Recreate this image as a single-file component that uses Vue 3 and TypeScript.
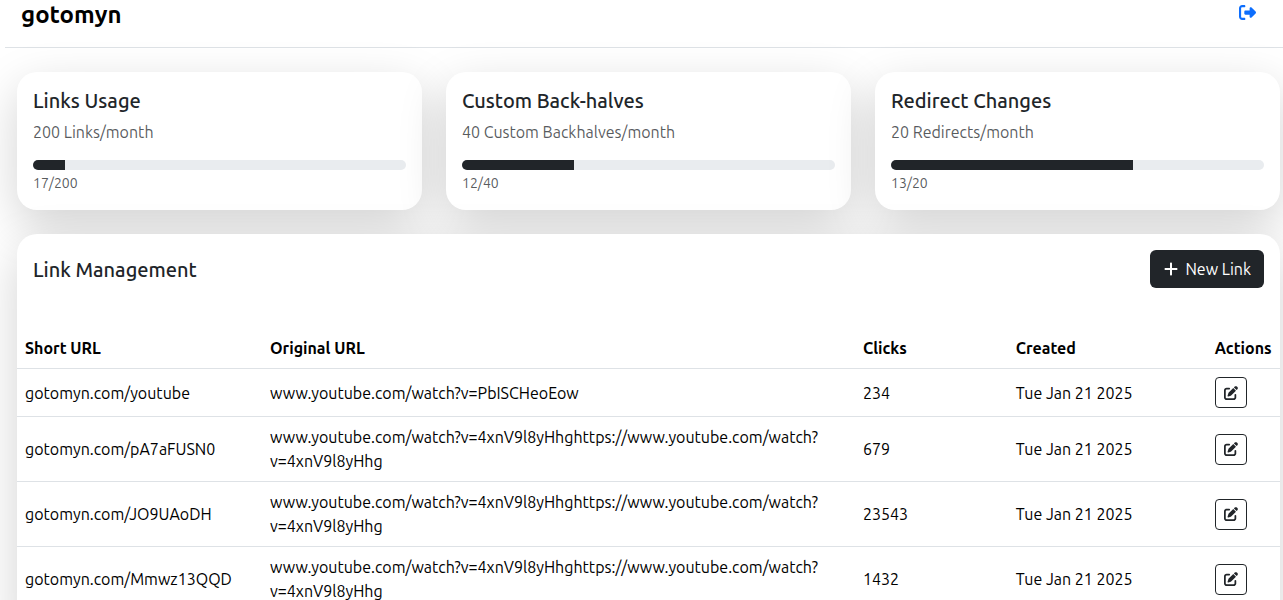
<script setup lang="ts">
interface Usage {
  title: string
  allowance: string
  used: number
  limit: number
}

interface ShortLink {
  short: string
  original: string
  clicks: number
  created: string
}

const usages: Usage[] = [
  { title: 'Links Usage', allowance: '200 Links/month', used: 17, limit: 200 },
  { title: 'Custom Back-halves', allowance: '40 Custom Backhalves/month', used: 12, limit: 40 },
  { title: 'Redirect Changes', allowance: '20 Redirects/month', used: 13, limit: 20 },
]

const repeatedUrl = 'www.youtube.com/watch?v=4xnV9l8yHhghttps://www.youtube.com/watch?v=4xnV9l8yHhg'

const links: ShortLink[] = [
  { short: 'gotomyn.com/youtube', original: 'www.youtube.com/watch?v=PbISCHeoEow', clicks: 234, created: 'Tue Jan 21 2025' },
  { short: 'gotomyn.com/pA7aFUSN0', original: repeatedUrl, clicks: 679, created: 'Tue Jan 21 2025' },
  { short: 'gotomyn.com/JO9UAoDH', original: repeatedUrl, clicks: 23543, created: 'Tue Jan 21 2025' },
  { short: 'gotomyn.com/Mmwz13QQD', original: repeatedUrl, clicks: 1432, created: 'Tue Jan 21 2025' },
]

const percent = (u: Usage): string => `${(u.used / u.limit) * 100}%`
</script>

<template>
  <div class="page">
    <header class="topbar">
      <h1 class="brand">gotomyn</h1>
      <a class="signout" href="#" aria-label="Sign out">
        <svg viewBox="0 0 512 512" aria-hidden="true">
          <path d="M377.9 105.9L500.7 228.7c7.2 7.2 11.3 17.1 11.3 27.3s-4.1 20.1-11.3 27.3L377.9 406.1c-6.4 6.4-15 9.9-24 9.9c-18.7 0-33.9-15.2-33.9-33.9l0-62.1-128 0c-17.7 0-32-14.3-32-32l0-64c0-17.7 14.3-32 32-32l128 0 0-62.1c0-18.7 15.2-33.9 33.9-33.9c9 0 17.6 3.6 24 9.9zM160 96L96 96c-17.7 0-32 14.3-32 32l0 256c0 17.7 14.3 32 32 32l64 0c17.7 0 32 14.3 32 32s-14.3 32-32 32l-64 0c-53 0-96-43-96-96L0 128C0 75 43 32 96 32l64 0c17.7 0 32 14.3 32 32s-14.3 32-32 32z" />
        </svg>
      </a>
    </header>

    <main class="content">
      <section class="usages">
        <article v-for="u in usages" :key="u.title" class="card usage">
          <h2 class="heading">{{ u.title }}</h2>
          <p class="allowance">{{ u.allowance }}</p>
          <div class="track" role="progressbar" :aria-label="u.title" :aria-valuenow="u.used" aria-valuemin="0" :aria-valuemax="u.limit">
            <div class="fill" :style="{ width: percent(u) }"></div>
          </div>
          <small class="count">{{ u.used }}/{{ u.limit }}</small>
        </article>
      </section>

      <section class="card management">
        <div class="management-head">
          <h2 class="heading">Link Management</h2>
          <button class="new-link" type="button">
            <svg viewBox="0 0 448 512" aria-hidden="true">
              <path d="M256 80c0-17.7-14.3-32-32-32s-32 14.3-32 32V224H48c-17.7 0-32 14.3-32 32s14.3 32 32 32H192V432c0 17.7 14.3 32 32 32s32-14.3 32-32V288H400c17.7 0 32-14.3 32-32s-14.3-32-32-32H256V80z" />
            </svg>
            <span>New Link</span>
          </button>
        </div>
        <table class="links">
          <colgroup>
            <col class="col-short" />
            <col class="col-original" />
            <col class="col-clicks" />
            <col class="col-created" />
            <col />
          </colgroup>
          <thead>
            <tr>
              <th scope="col">Short URL</th>
              <th scope="col">Original URL</th>
              <th scope="col">Clicks</th>
              <th scope="col">Created</th>
              <th scope="col">Actions</th>
            </tr>
          </thead>
          <tbody>
            <tr v-for="l in links" :key="l.short">
              <td>{{ l.short }}</td>
              <td>{{ l.original }}</td>
              <td>{{ l.clicks }}</td>
              <td>{{ l.created }}</td>
              <td>
                <button class="edit" type="button" :aria-label="`Edit ${l.short}`">
                  <svg viewBox="0 0 512 512" aria-hidden="true">
                    <path d="M471.6 21.7c-21.9-21.9-57.3-21.9-79.2 0L362.3 51.7l97.9 97.9 30.1-30.1c21.9-21.9 21.9-57.3 0-79.2L471.6 21.7zm-299.2 220c-6.1 6.1-10.8 13.6-13.5 21.9l-29.6 88.8c-2.9 8.6-.6 18.1 5.8 24.6s15.9 8.7 24.6 5.8l88.8-29.6c8.2-2.7 15.7-7.4 21.9-13.5L437.7 172.3 339.7 74.3 172.4 241.7zM96 64C43 64 0 107 0 160V416c0 53 43 96 96 96H352c53 0 96-43 96-96V320c0-17.7-14.3-32-32-32s-32 14.3-32 32v96c0 17.7-14.3 32-32 32H96c-17.7 0-32-14.3-32-32V160c0-17.7 14.3-32 32-32h96c17.7 0 32-14.3 32-32s-14.3-32-32-32H96z" />
                  </svg>
                </button>
              </td>
            </tr>
          </tbody>
        </table>
      </section>
    </main>
  </div>
</template>

<style>
body {
  background: #fff;
  overflow-x: hidden;
}
</style>

<style scoped>
.page {
  padding-left: 5px;
  font-family: Ubuntu, "Noto Sans", sans-serif;
  font-size: 16px;
  line-height: 24px;
  color: #212529;
}

.page *,
.page *::before {
  box-sizing: border-box;
}

.topbar {
  display: flex;
  justify-content: space-between;
  align-items: flex-start;
  padding: 0 27px 17px 16px;
  border-bottom: 1px solid #dee2e6;
}

.brand {
  margin: 0;
  font-size: 24px;
  line-height: 30px;
  font-weight: 600;
  color: #000;
}

.signout {
  display: flex;
  padding-top: 4px;
  color: #0d6efd;
}

.signout svg {
  width: 17px;
  height: 17px;
}

svg {
  display: block;
  fill: currentColor;
}

.content {
  display: flex;
  flex-direction: column;
  gap: 24px;
  padding: 24px 3px 24px 12px;
}

.usages {
  display: grid;
  grid-template-columns: repeat(3, 1fr);
  gap: 24px;
}

.card {
  background: #fff;
  border-radius: 20px;
  box-shadow: 0 16px 48px rgba(0, 0, 0, 0.176);
}

.usage {
  padding: 16px 16px 14px;
}

.heading {
  margin: 0;
  font-size: 20px;
  line-height: 26px;
  font-weight: 500;
}

.allowance {
  margin: 6px 0 16px;
  color: rgba(33, 37, 41, 0.75);
}

.track {
  height: 10px;
  overflow: hidden;
  border-radius: 6px;
  background: #e9ecef;
}

.fill {
  height: 100%;
  background: #212529;
}

.count {
  display: block;
  font-size: 14px;
  line-height: 26px;
  color: rgba(33, 37, 41, 0.75);
}

.management {
  padding-bottom: 24px;
}

.management-head {
  display: flex;
  justify-content: space-between;
  align-items: flex-start;
  padding: 16px 16px 38px;
}

.management-head .heading {
  line-height: 40px;
}

.new-link {
  display: flex;
  align-items: center;
  gap: 6px;
  padding: 7px 13px;
  border: 0;
  border-radius: 6px;
  background: #212529;
  color: #fff;
  font: inherit;
}

.new-link svg {
  width: 16px;
  height: 16px;
}

.links {
  width: 100%;
  table-layout: fixed;
  border-collapse: collapse;
  color: #000;
}

.col-short {
  width: 19.4%;
}

.col-original {
  width: 46.95%;
}

.col-clicks {
  width: 12.1%;
}

.col-created {
  width: 15.75%;
}

th,
td {
  padding: 8px;
  border-bottom: 1px solid #dee2e6;
  text-align: left;
  vertical-align: middle;
}

th {
  font-weight: 600;
}

.edit {
  display: flex;
  align-items: center;
  justify-content: center;
  width: 32px;
  height: 31px;
  padding: 0;
  border: 1px solid #212529;
  border-radius: 4px;
  background: #fff;
  color: #212529;
}

.edit svg {
  width: 14px;
  height: 14px;
}
</style>
